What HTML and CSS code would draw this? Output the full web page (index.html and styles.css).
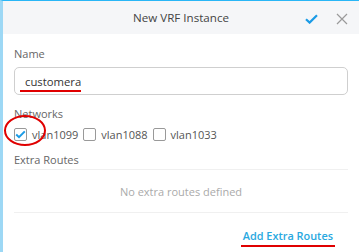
FILE: index.html
```html
<!DOCTYPE html>
<html>
<head>
<meta charset="utf-8">
<link rel="stylesheet" href="styles.css">
</head>
<body>
<div class="dialog">
  <div class="header">
    <div class="title">New VRF Instance</div>
    <div class="actions">
      <svg class="icon-ok" width="13" height="10" viewBox="0 0 13 10"><path d="M1 5.2 L4.6 8.6 L12 1.2" fill="none" stroke="#1a9be6" stroke-width="2.2"/></svg>
      <svg class="icon-close" width="12" height="12" viewBox="0 0 12 12"><path d="M1 1 L11 11 M11 1 L1 11" fill="none" stroke="#9a9a9a" stroke-width="1.2"/></svg>
    </div>
  </div>
  <div class="body">
    <div class="label label-name">Name</div>
    <div class="input"><span class="marked">customera</span></div>
    <div class="label label-networks">Networks</div>
    <div class="networks">
      <label class="net">
        <span class="box checked"><svg width="11" height="9" viewBox="0 0 11 9"><path d="M1.2 4.6 L4 7.2 L9.8 1.4" fill="none" stroke="#1a9be6" stroke-width="2"/></svg></span>
        <span>vlan1099</span>
        <span class="circle"></span>
      </label>
      <label class="net"><span class="box"></span><span>vlan1088</span></label>
      <label class="net"><span class="box"></span><span>vlan1033</span></label>
    </div>
    <div class="label label-routes">Extra Routes</div>
    <div class="routes">No extra routes defined</div>
    <div class="footer"><a class="add marked-link">Add Extra Routes</a></div>
  </div>
</div>
</body>
</html>
```
FILE: styles.css
```css
html, body {
  margin: 0;
  padding: 0;
  background: #fff;
}
body {
  font-family: "Open Sans", "Noto Sans", sans-serif;
  font-size: 11px;
  color: #444;
}
.dialog {
  width: 359px;
  height: 252px;
  box-sizing: border-box;
  border-top: 1px solid #29b6f6;
  border-left: 3px solid #9dd8f5;
  background: #fff;
}
.header {
  height: 33px;
  background: #f5f6f8;
  display: flex;
  align-items: center;
  justify-content: center;
  position: relative;
}
.title {
  font-size: 11.6px;
  color: #444;
  line-height: 15px;
}
.actions {
  position: absolute;
  right: 11px;
  top: 11px;
  display: flex;
  align-items: center;
  gap: 18px;
}
.icon-ok { display: block; }
.icon-close { display: block; margin-top: 1px; }
.body {
  padding: 11px 11px 0 11px;
}
.label {
  color: #666;
  line-height: 15px;
}
.label-name { margin-top: 1px; }
.input {
  margin-top: 6px;
  height: 28px;
  box-sizing: border-box;
  border: 1px solid #cfcfcf;
  border-radius: 5px;
  padding: 0 10px;
  display: flex;
  align-items: center;
  color: #333;
  font-size: 11.3px;
}
.marked {
  position: relative;
}
.marked::after {
  content: "";
  position: absolute;
  left: -5px;
  right: 0;
  bottom: -3px;
  height: 2px;
  background: #e00000;
}
.label-networks { margin-top: 11px; }
.networks {
  margin-top: 4px;
  display: flex;
  align-items: center;
  gap: 5px;
  height: 18px;
}
.net {
  display: flex;
  align-items: center;
  gap: 5px;
  color: #555;
  position: relative;
  line-height: 15px;
}
.box {
  width: 13px;
  height: 13px;
  box-sizing: border-box;
  border: 1px solid #999;
  border-radius: 2px;
  background: #fff;
  display: flex;
  align-items: center;
  justify-content: center;
}
.circle {
  position: absolute;
  left: -10px;
  top: -12px;
  width: 38px;
  height: 27px;
  border: 2px solid #e00000;
  border-radius: 50%;
}
.label-routes { margin-top: 9px; }
.routes {
  margin-top: 2px;
  height: 44px;
  box-sizing: border-box;
  border-top: 1px solid #f0f0f0;
  border-bottom: 1px solid #f0f0f0;
  display: flex;
  align-items: center;
  justify-content: center;
  color: #aaa;
}
.footer {
  display: flex;
  justify-content: flex-end;
  padding-right: 15px;
  margin-top: 16px;
}
.add {
  color: #29a8e0;
  font-weight: 600;
  font-size: 10.9px;
  line-height: 14px;
  position: relative;
  cursor: pointer;
}
.marked-link::after {
  content: "";
  position: absolute;
  left: -2px;
  right: -2px;
  bottom: -4px;
  height: 2px;
  background: #e00000;
}
```
